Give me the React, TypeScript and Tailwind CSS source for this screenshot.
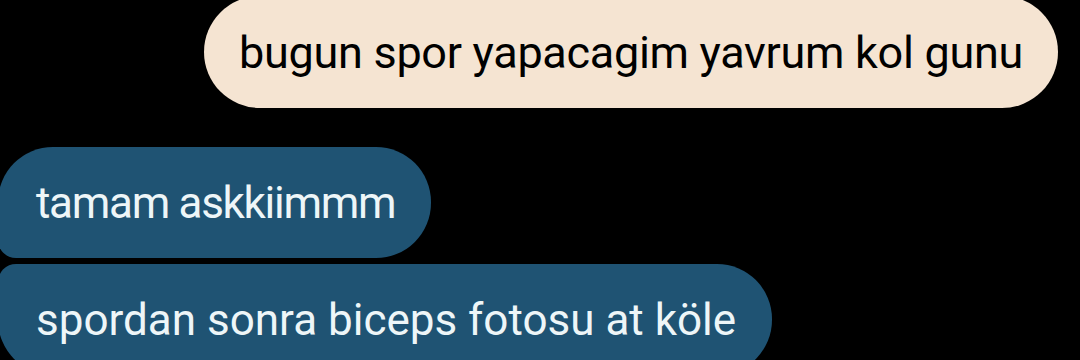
export default function App() {
  return (
    <div
      className="w-[1080px] h-[360px] overflow-hidden bg-black flex flex-col"
      style={{ fontFamily: 'Roboto, "Noto Sans", sans-serif' }}
    >
      <div className="flex justify-end pr-[22px] -mt-[4px]">
        <div className="h-[112px] px-[35px] flex items-center rounded-[56px] bg-[#f5e4d2] text-black text-[45px] tracking-[-0.3px] leading-none">
          bugun spor yapacagim yavrum kol gunu
        </div>
      </div>

      <div className="flex flex-col items-start mt-[39px] gap-[6px] -ml-[2px]">
        <div className="h-[111px] pl-[38px] pr-[36px] flex items-center rounded-[55px] rounded-bl-[18px] bg-[#1f5373] text-[#eef6f8] text-[44px] tracking-[-1.3px] leading-none">
          tamam askkiimmm
        </div>
        <div className="h-[111px] pl-[38px] pr-[36px] flex items-center rounded-[55px] rounded-tl-[18px] bg-[#1f5373] text-[#eef6f8] text-[44px] leading-none">
          spordan sonra biceps fotosu at köle
        </div>
      </div>
    </div>
  );
}
